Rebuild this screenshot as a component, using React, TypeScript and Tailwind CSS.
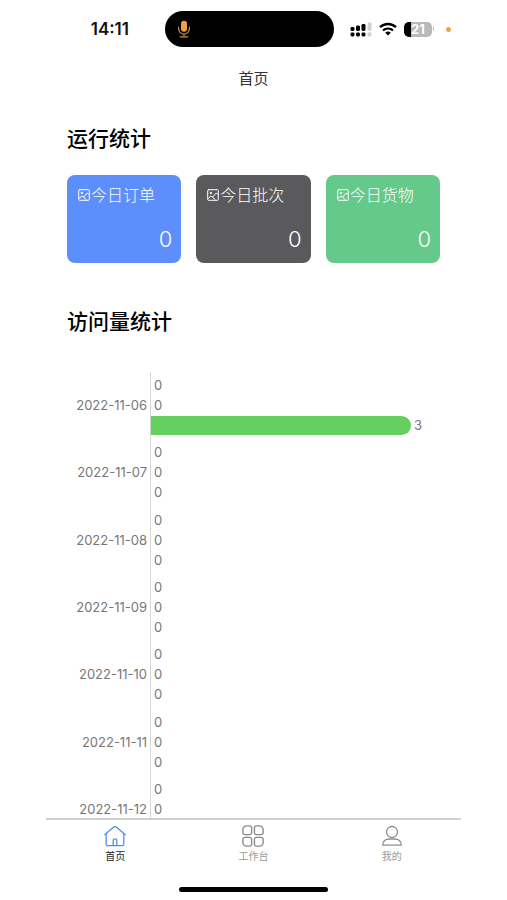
import type { ReactNode } from "react";
import clsx from "clsx";

const STATS = [
  { title: "今日订单", value: 0, bg: "bg-[#5c8efc]" },
  { title: "今日批次", value: 0, bg: "bg-[#5a5a5c]" },
  { title: "今日货物", value: 0, bg: "bg-[#64c98a]" },
];

const VISITS = [
  { date: "2022-11-06", values: [0, 0, 3] },
  { date: "2022-11-07", values: [0, 0, 0] },
  { date: "2022-11-08", values: [0, 0, 0] },
  { date: "2022-11-09", values: [0, 0, 0] },
  { date: "2022-11-10", values: [0, 0, 0] },
  { date: "2022-11-11", values: [0, 0, 0] },
  { date: "2022-11-12", values: [0, 0, 0] },
];

const MAX_VISITS = 3;

function MicIcon() {
  return (
    <svg width="14" height="18" viewBox="0 0 14 18" fill="none" aria-hidden="true">
      <rect x="4" y="0.8" width="6" height="11" rx="3" fill="#f0a23c" />
      <path
        d="M1.6 7v1.8a5.4 5.4 0 0 0 10.8 0V7M7 14.2v2.4M3.2 16.8h7.6"
        stroke="#c98a3e"
        strokeWidth="1.2"
        strokeLinecap="round"
      />
    </svg>
  );
}

function SignalIcon() {
  return (
    <svg width="22" height="15" viewBox="0 0 22 15" aria-hidden="true">
      <g fill="#000">
        <rect x="0.5" y="5" width="4" height="4" rx="1.4" />
        <rect x="6" y="3.5" width="4" height="5.5" rx="1.4" />
        <rect x="11.5" y="2" width="4" height="7" rx="1.4" />
        <rect x="0.5" y="10.5" width="4" height="4" rx="1.4" />
        <rect x="6" y="10.5" width="4" height="4" rx="1.4" />
        <rect x="11.5" y="10.5" width="4" height="4" rx="1.4" />
      </g>
      <g fill="#d0d0d0">
        <rect x="17.5" y="0.5" width="4" height="8.5" rx="1.4" />
        <rect x="17.5" y="10.5" width="4" height="4" rx="1.4" />
      </g>
    </svg>
  );
}

function WifiIcon() {
  return (
    <svg width="18" height="14" viewBox="0 0 18 14" fill="none" aria-hidden="true">
      <path d="M1 5.2a11.6 11.6 0 0 1 16 0" stroke="#000" strokeWidth="2.3" />
      <path d="M4 8.5a7.3 7.3 0 0 1 10 0" stroke="#000" strokeWidth="2.2" />
      <path d="M9 13.6 6.2 10.8a4 4 0 0 1 5.6 0Z" fill="#000" />
    </svg>
  );
}

function PictureIcon() {
  return (
    <svg
      width="12"
      height="12"
      viewBox="0 0 12 12"
      fill="none"
      stroke="currentColor"
      strokeLinecap="round"
      strokeLinejoin="round"
      aria-hidden="true"
    >
      <rect x="0.7" y="0.7" width="10.6" height="10.6" rx="0.8" />
      <circle cx="3.8" cy="4" r="0.8" />
      <path d="M1.2 9.4 4 7l1.6 1.2L9.2 4l2 1.6M5.6 8.2l2.6 2.4" />
    </svg>
  );
}

function HomeIcon() {
  return (
    <svg
      width="22"
      height="22"
      viewBox="0 0 22 22"
      fill="none"
      stroke="currentColor"
      strokeWidth="1.3"
      strokeLinecap="round"
      strokeLinejoin="round"
      aria-hidden="true"
    >
      <path d="M0.9 9.6 9.8 1.9a1.8 1.8 0 0 1 2.4 0l8.9 7.7" />
      <path d="M2.2 8.8v10.4a1.4 1.4 0 0 0 1.4 1.4h14.8a1.4 1.4 0 0 0 1.4-1.4V8.8" />
      <path d="M9.2 20.4v-4.8a1.8 1.8 0 0 1 3.6 0v4.8" />
    </svg>
  );
}

function GridIcon() {
  return (
    <svg
      width="22"
      height="22"
      viewBox="0 0 22 22"
      fill="none"
      stroke="currentColor"
      strokeWidth="1.4"
      aria-hidden="true"
    >
      <path d="M4.6 0.9h3.2A1.8 1.8 0 0 1 9.6 2.7v5.1A1.8 1.8 0 0 1 7.8 9.6H2.7A1.8 1.8 0 0 1 0.9 7.8V4.6A3.7 3.7 0 0 1 4.6 0.9Z" />
      <path d="M14.2 0.9h3.2a3.7 3.7 0 0 1 3.7 3.7v3.2a1.8 1.8 0 0 1-1.8 1.8h-5.1a1.8 1.8 0 0 1-1.8-1.8V2.7a1.8 1.8 0 0 1 1.8-1.8Z" />
      <path d="M2.7 12.4h5.1a1.8 1.8 0 0 1 1.8 1.8v5.1a1.8 1.8 0 0 1-1.8 1.8H4.6a3.7 3.7 0 0 1-3.7-3.7v-3.2a1.8 1.8 0 0 1 1.8-1.8Z" />
      <path d="M14.2 12.4h5.1a1.8 1.8 0 0 1 1.8 1.8v3.2a3.7 3.7 0 0 1-3.7 3.7h-3.2a1.8 1.8 0 0 1-1.8-1.8v-5.1a1.8 1.8 0 0 1 1.8-1.8Z" />
    </svg>
  );
}

function UserIcon() {
  return (
    <svg
      width="22"
      height="22"
      viewBox="0 0 22 22"
      fill="none"
      stroke="currentColor"
      strokeWidth="1.3"
      strokeLinejoin="round"
      aria-hidden="true"
    >
      <circle cx="11" cy="7" r="5.5" />
      <path d="M1.7 20.2c0-4 3-6.2 6.4-6.2h5.8c3.4 0 6.4 2.2 6.4 6.2Z" />
    </svg>
  );
}

function StatusBar() {
  return (
    <div className="grid h-[58px] shrink-0 grid-cols-[1fr_169px_1fr] items-center gap-4 pr-2">
      <p className="pr-5 text-right text-[17px] leading-5 font-semibold text-[#111]">
        14:11
      </p>
      <div className="flex h-9 items-center rounded-full bg-black pl-3">
        <MicIcon />
      </div>
      <div className="flex items-center">
        <SignalIcon />
        <div className="ml-[7px]">
          <WifiIcon />
        </div>
        <div className="ml-[7px] flex h-[15px] w-7 items-center justify-center rounded-[5px] bg-linear-to-r from-black from-25% to-[#b9b9b9] to-25% text-[13px] leading-none font-bold text-white">
          21
        </div>
        <div className="ml-px h-1 w-px rounded-r bg-[#b9b9b9]" />
        <div className="ml-3 size-[5px] rounded-full bg-[#eda64f]" />
      </div>
    </div>
  );
}

function SectionTitle({ children }: { children: ReactNode }) {
  return (
    <h2 className="text-[21px] leading-8 font-medium text-black">{children}</h2>
  );
}

const TABS = [
  { label: "首页", icon: HomeIcon, active: true },
  { label: "工作台", icon: GridIcon, active: false },
  { label: "我的", icon: UserIcon, active: false },
];

export default function App() {
  return (
    <div className="flex h-screen flex-col bg-white px-[46px] font-['Inter','Noto_Sans_CJK_SC',sans-serif]">
      <StatusBar />
      <header className="flex h-[42px] shrink-0 items-center justify-center">
        <h1 className="text-[15px] leading-5 text-[#333]">首页</h1>
      </header>

      <main className="min-h-0 flex-1 overflow-y-auto px-[21px] pt-[23px] [scrollbar-width:none]">
        <SectionTitle>运行统计</SectionTitle>
        <div className="mt-5 grid grid-cols-3 gap-[15px]">
          {STATS.map(({ title, value, bg }) => (
            <section
              key={title}
              className={clsx(
                "flex h-[88px] flex-col justify-between rounded-lg py-2 pr-[9px] pl-[11px] text-white",
                bg
              )}
            >
              <h3 className="flex items-center gap-px text-[16px] leading-6 font-light whitespace-nowrap">
                <PictureIcon />
                {title}
              </h3>
              <p className="text-right text-[22px] leading-8 font-light">
                {value}
              </p>
            </section>
          ))}
        </div>

        <div className="mt-[43px]">
          <SectionTitle>访问量统计</SectionTitle>
        </div>
        <div className="mt-[34px] flex h-[471px] flex-col text-[13px] leading-[19px] text-[#777]">
          {VISITS.map(({ date, values }) => (
            <div key={date} className="flex flex-1">
              <p className="flex w-[83px] shrink-0 items-center justify-end pr-[3px]">
                {date}
              </p>
              <div className="flex flex-1 flex-col justify-center gap-px border-l border-[#d5d5d5] pr-[29px]">
                {values.map((value, i) => (
                  <div key={i} className="flex h-[19px]">
                    <div
                      className="shrink-0 rounded-r-full bg-[#65d05f]"
                      style={{ width: `${(value / MAX_VISITS) * 100}%` }}
                    />
                    <span className="ml-[3px]">{value}</span>
                  </div>
                ))}
              </div>
            </div>
          ))}
        </div>
      </main>

      <nav className="grid h-[82px] shrink-0 grid-cols-3 border-t-2 border-[#d0d0d0] pt-[5px]">
        {TABS.map(({ label, icon: Icon, active }) => (
          <a
            key={label}
            href="#"
            aria-current={active ? "page" : undefined}
            className="flex flex-col items-center gap-[3px]"
          >
            <span className={active ? "text-[#4b93ea]" : "text-[#8c8c8c]"}>
              <Icon />
            </span>
            <span
              className={clsx(
                "text-[10px] leading-3",
                active ? "text-[#222]" : "text-[#999]"
              )}
            >
              {label}
            </span>
          </a>
        ))}
        <div className="col-span-3 mb-2 h-[5px] w-[149px] self-end justify-self-center rounded-full bg-black" />
      </nav>
    </div>
  );
}
